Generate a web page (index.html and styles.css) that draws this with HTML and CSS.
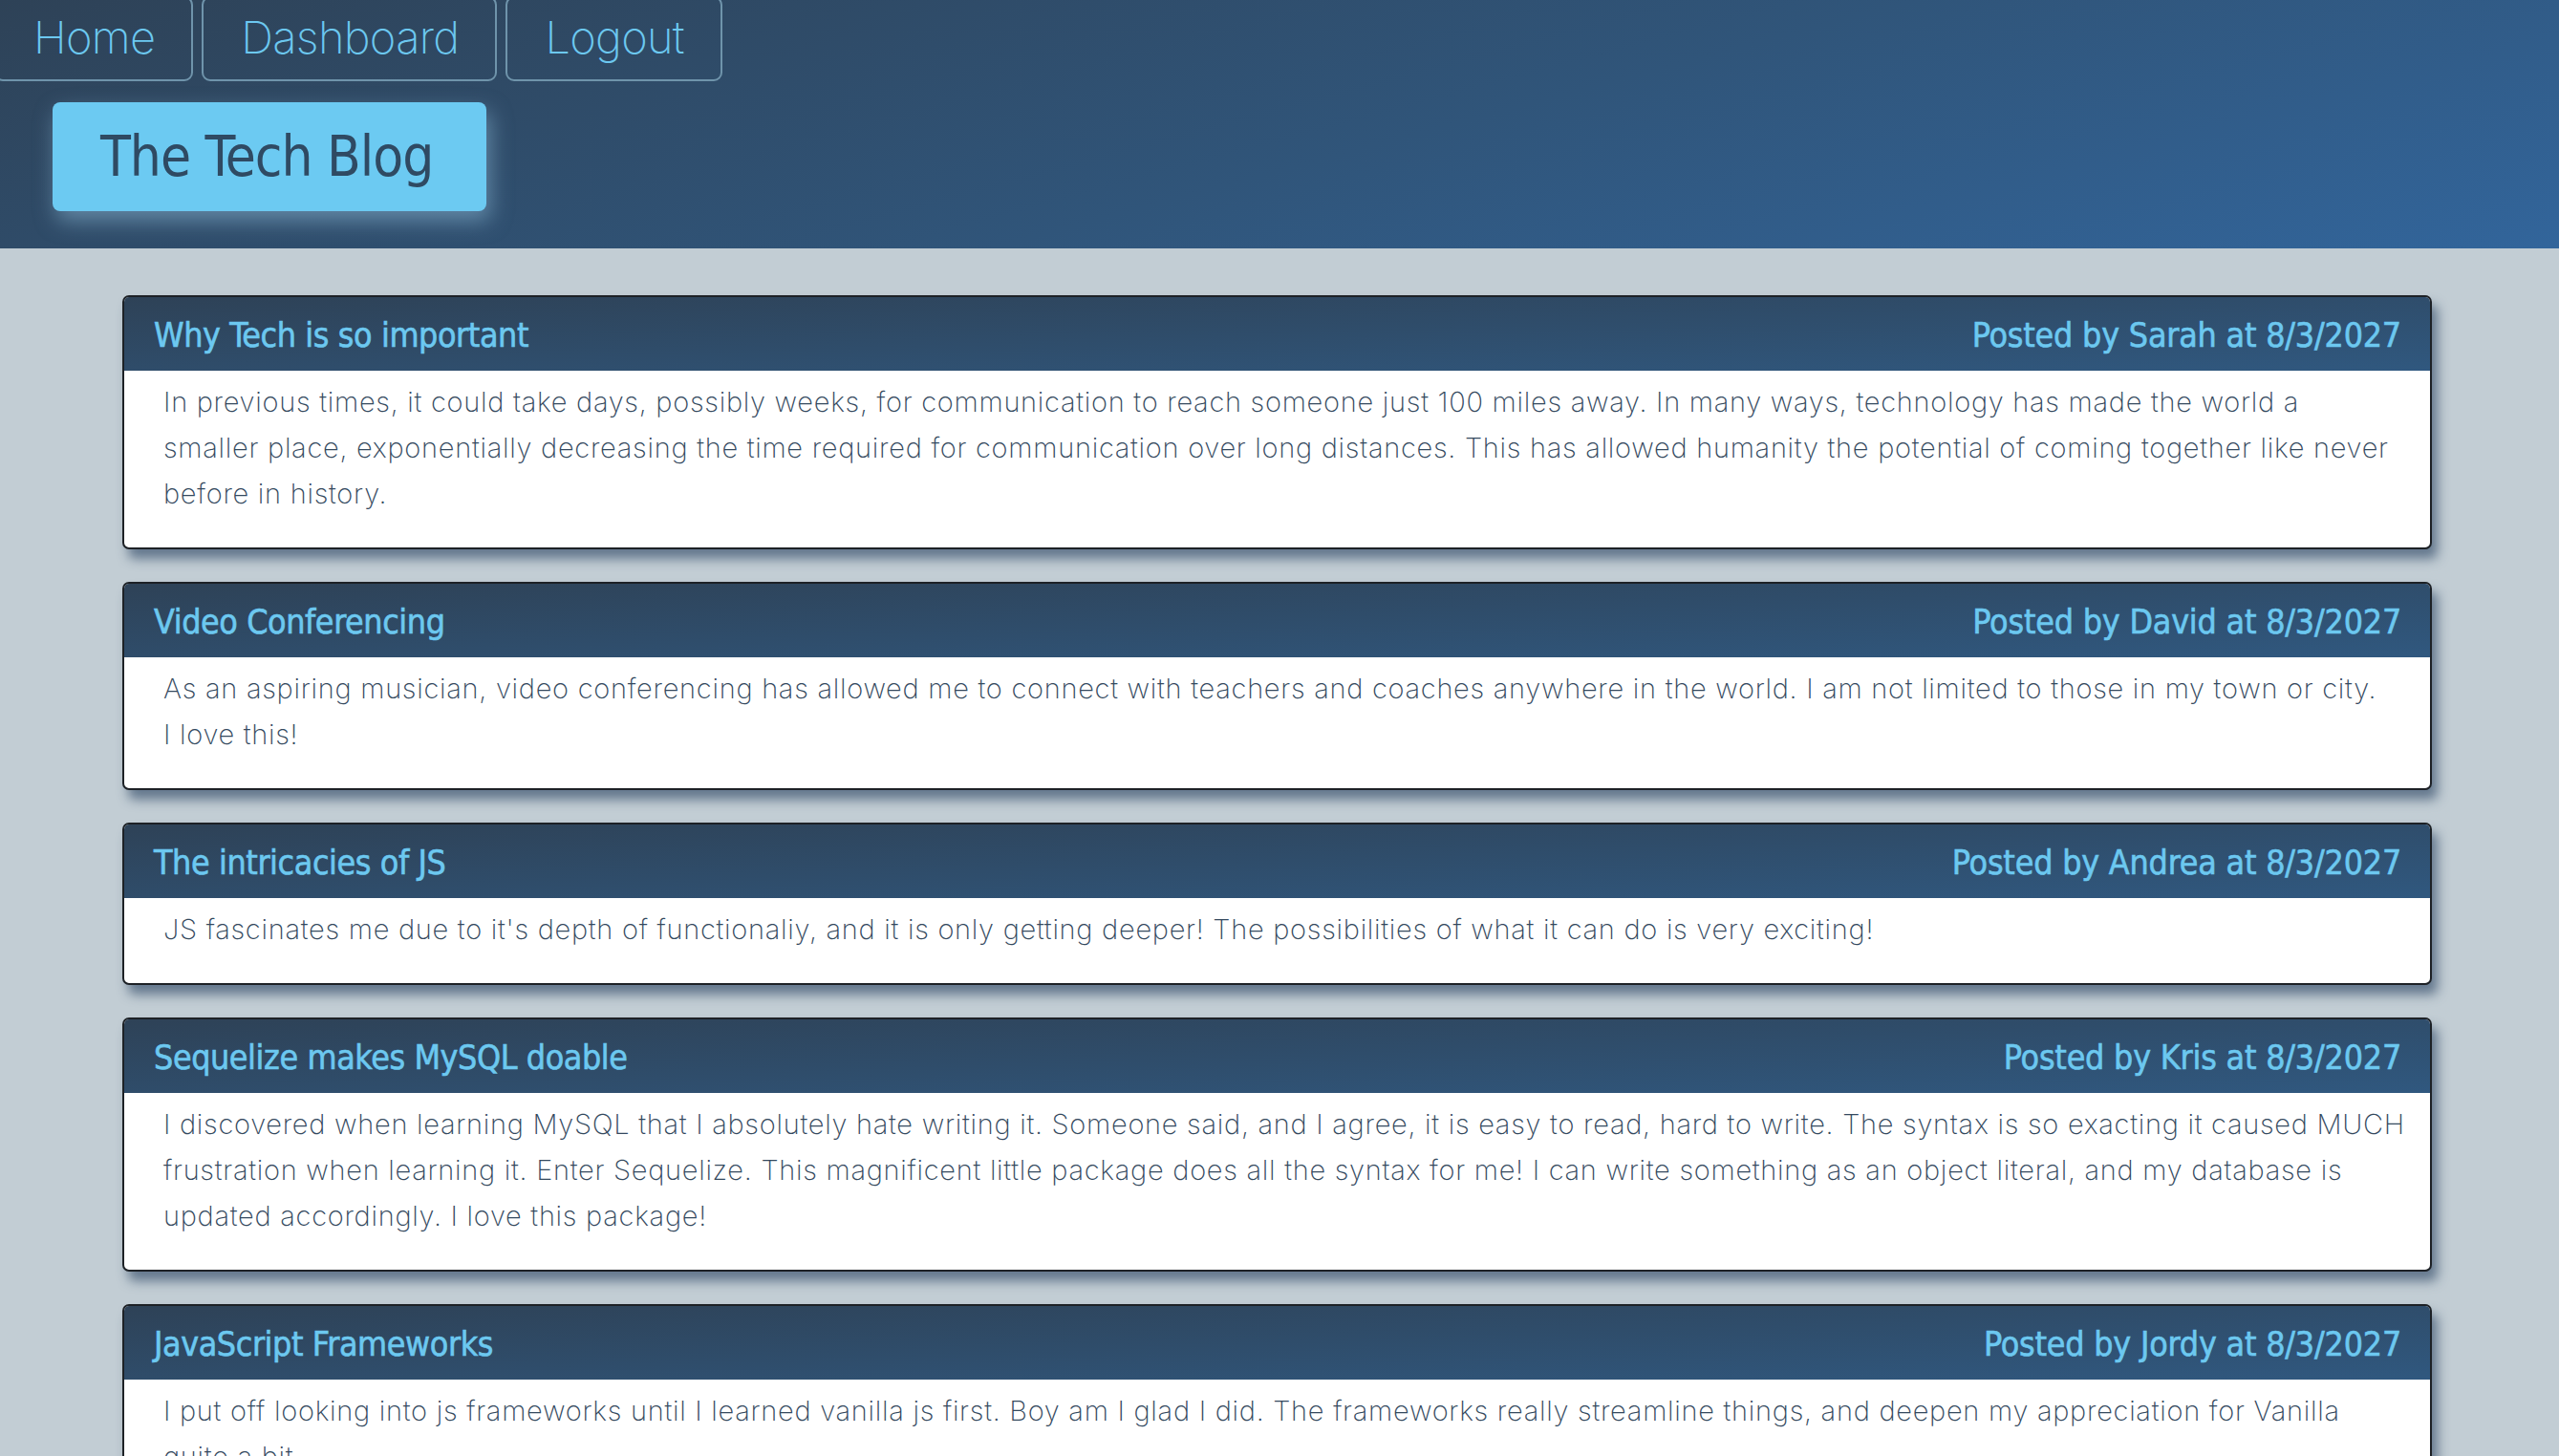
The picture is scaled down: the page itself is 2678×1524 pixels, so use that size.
FILE: index.html
```html
<!DOCTYPE html>
<html lang="en">
<head>
<meta charset="utf-8">
<title>The Tech Blog</title>
<link rel="stylesheet" href="styles.css">
</head>
<body>
<header class="site-header">
  <nav class="nav">
    <a class="nav-link nav-home" href="#">Home</a>
    <a class="nav-link" href="#">Dashboard</a>
    <a class="nav-link" href="#">Logout</a>
  </nav>
  <h1 class="brand">The Tech Blog</h1>
</header>
<main class="posts">
  <article class="post">
    <div class="post-head"><h2 class="post-title">Why Tech is so important</h2><span class="post-meta">Posted by Sarah at 8/3/2027</span></div>
    <p class="post-body">In previous times, it could take days, possibly weeks, for communication to reach someone just 100 miles away. In many ways, technology has made the world a<br>smaller place, exponentially decreasing the time required for communication over long distances. This has allowed humanity the potential of coming together like never<br>before in history.</p>
  </article>
  <article class="post">
    <div class="post-head"><h2 class="post-title">Video Conferencing</h2><span class="post-meta">Posted by David at 8/3/2027</span></div>
    <p class="post-body">As an aspiring musician, video conferencing has allowed me to connect with teachers and coaches anywhere in the world. I am not limited to those in my town or city.<br>I love this!</p>
  </article>
  <article class="post">
    <div class="post-head"><h2 class="post-title">The intricacies of JS</h2><span class="post-meta">Posted by Andrea at 8/3/2027</span></div>
    <p class="post-body">JS fascinates me due to it's depth of functionaliy, and it is only getting deeper! The possibilities of what it can do is very exciting!</p>
  </article>
  <article class="post">
    <div class="post-head"><h2 class="post-title">Sequelize makes MySQL doable</h2><span class="post-meta">Posted by Kris at 8/3/2027</span></div>
    <p class="post-body">I discovered when learning MySQL that I absolutely hate writing it. Someone said, and I agree, it is easy to read, hard to write. The syntax is so exacting it caused MUCH<br>frustration when learning it. Enter Sequelize. This magnificent little package does all the syntax for me! I can write something as an object literal, and my database is<br>updated accordingly. I love this package!</p>
  </article>
  <article class="post">
    <div class="post-head"><h2 class="post-title">JavaScript Frameworks</h2><span class="post-meta">Posted by Jordy at 8/3/2027</span></div>
    <p class="post-body">I put off looking into js frameworks until I learned vanilla js first. Boy am I glad I did. The frameworks really streamline things, and deepen my appreciation for Vanilla<br>quite a bit.</p>
  </article>
</main>
</body>
</html>
```
FILE: styles.css
```css
html, body {
  margin: 0;
  padding: 0;
}
body {
  background: #c2cdd4;
  font-family: Inter, "Noto Sans", sans-serif;
  overflow: hidden;
}
.site-header {
  height: 260px;
  background: linear-gradient(165deg, #2e4257 0%, #30557a 55%, #32659b 100%);
  box-sizing: border-box;
  overflow: hidden;
}
.nav {
  display: flex;
  gap: 9px;
  margin: -4px 0 0 -6px;
}
.nav-link {
  display: flex;
  align-items: center;
  height: 89px;
  box-sizing: border-box;
  padding: 0 38px 5px 39px;
  border: 2px solid #6f94ab;
  border-radius: 9px;
  color: #6cc8f0;
  font-family: Inter, sans-serif;
  font-weight: 200;
  font-size: 47px;
  letter-spacing: -0.7px;
  text-decoration: none;
}
.brand {
  display: inline-flex;
  align-items: center;
  margin: 22px 0 0 55px;
  height: 114px;
  width: 454px;
  box-sizing: border-box;
  padding: 0 0 0 50px;
  background: #6ccaf2;
  border-radius: 8px;
  box-shadow: 4px 10px 22px rgba(140, 185, 215, 0.55);
  color: #2f4a63;
  font-family: "DejaVu Sans Condensed", "DejaVu Sans", sans-serif;
  font-stretch: condensed;
  font-weight: 400;
  font-size: 58px;
  letter-spacing: -1px;
}
.posts {
  padding: 49px 133px 0 128px;
  display: flex;
  flex-direction: column;
  gap: 34px;
}
.post {
  border: 2px solid #1d2126;
  border-radius: 7px;
  background: #fff;
  box-shadow: 6px 10px 12px rgba(50, 75, 105, 0.65);
  overflow: hidden;
}
.post-head {
  height: 77px;
  display: flex;
  align-items: center;
  justify-content: space-between;
  padding: 2px 30px 0 31px;
  box-sizing: border-box;
  background: linear-gradient(178deg, #2e4257 0%, #30587f 100%);
  color: #6cc8f0;
  font-family: "DejaVu Sans Condensed", "DejaVu Sans", sans-serif;
  font-stretch: condensed;
}
.post-title, .post-meta {
  margin: 0;
  font-size: 35.5px;
  font-weight: 400;
  letter-spacing: -0.4px;
  -webkit-text-stroke: 0.6px currentColor;
}
.post-meta {
  letter-spacing: -0.2px;
}
.post-body {
  margin: 0;
  padding: 9px 17px 32px 41px;
  font-family: Inter, sans-serif;
  font-weight: 250;
  font-size: 29px;
  letter-spacing: 0.72px;
  line-height: 48px;
  color: #34495e;
  white-space: nowrap;
}
```
